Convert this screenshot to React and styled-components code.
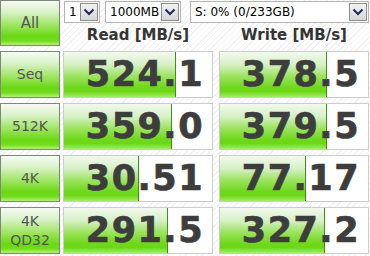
import React from "react";
import styled, { createGlobalStyle } from "styled-components";

// Global page style
const GlobalStyle = createGlobalStyle`
    html, body {
        margin: 0;
        padding: 0;
        background: #ffffff;
    }
`

// Data
const combos = [
    { label: "1", width: 36 },
    { label: "1000MB", width: 76 },
    { label: "S: 0% (0/233GB)", width: 179 },
]

const rows = [
    { name: ["Seq"], read: "524.1", readBar: 112, write: "378.5", writeBar: 107 },
    { name: ["512K"], read: "359.0", readBar: 108, write: "379.5", writeBar: 107 },
    { name: ["4K"], read: "30.51", readBar: 75, write: "77.17", writeBar: 86 },
    { name: ["4K", "QD32"], read: "291.5", readBar: 104, write: "327.2", writeBar: 105 },
]

// Window
const Window = styled.div`
    width: 370px;
    height: 256px;
    overflow: hidden;
    box-sizing: border-box;
    display: flex;
    flex-direction: column;
    gap: 5px;
    background-color: #ffffff;
    background-image: repeating-linear-gradient(
        135deg,
        #ffffff 0px,
        #ffffff 3px,
        #f1f1f1 3px,
        #f1f1f1 4px
    );
    font-family: "DejaVu Sans", Verdana, sans-serif;
`

// Row of a button and two meters
const Row = styled.div`
    display: flex;
    gap: 3px;
    height: ${(props) => props.height || 47}px;
`

// Green button on the left
const TestButton = styled.div`
    width: 60px;
    height: 100%;
    box-sizing: border-box;
    border: 1px solid #7b8a78;
    display: flex;
    flex-direction: column;
    align-items: center;
    justify-content: center;
    color: #555555;
    font-size: ${(props) => props.size || 14}px;
    line-height: 19px;
    background: linear-gradient(
        to bottom,
        #f6faf3 0%,
        #d9f2c9 25%,
        #98e356 58%,
        #6ad812 80%,
        #72dc1c 90%,
        #b4f07c 100%
    );
`

// Right part of the top row
const Header = styled.div`
    flex: 1;
    display: flex;
    flex-direction: column;
    padding-top: 1px;
`

// Combo row
const ComboBar = styled.div`
    display: flex;
    gap: 5px;
    height: 22px;
    padding-left: 1px;

    & > :last-child {
        margin-left: 4px;
    }
`

const Combo = styled.div`
    width: ${(props) => props.width}px;
    box-sizing: border-box;
    border: 1px solid #b4b4b4;
    background: #ffffff;
    display: flex;
    align-items: center;
    justify-content: space-between;
    padding: 1px;
    font-size: 12px;
    color: #000000;
`

const ComboText = styled.span`
    padding-left: 3px;
    white-space: nowrap;
`

const DropButton = styled.div`
    width: 18px;
    height: 100%;
    box-sizing: border-box;
    border: 1px solid #8c8c8c;
    background: linear-gradient(to bottom, #f2f2f2, #d6d6d6);
    display: flex;
    align-items: center;
    justify-content: center;
`

// Column titles
const Titles = styled.div`
    flex: 1;
    display: flex;
    gap: 6px;
    align-items: center;
    padding-top: 1px;
`

const Title = styled.div`
    width: 150px;
    text-align: center;
    font-weight: bold;
    font-size: 15px;
    color: #353535;
`

// Meter cell
const Meters = styled.div`
    display: flex;
    gap: 6px;
`

const Meter = styled.div`
    position: relative;
    width: 150px;
    height: 100%;
    box-sizing: border-box;
    border: 1px solid #cccccc;
    background: #ffffff;
    display: flex;
    align-items: center;
    justify-content: flex-end;
    padding-right: 8px;
    overflow: hidden;
`

const Fill = styled.div`
    position: absolute;
    left: 0;
    top: 0;
    bottom: 0;
    border-right: 1px solid #3f8f1a;
    background: linear-gradient(
        to bottom,
        #f2f9ee 0%,
        #d6f0c6 28%,
        #9ae35c 55%,
        #70d81c 78%,
        #6cd716 88%,
        #a6ec6a 100%
    );
`

const Value = styled.span`
    position: relative;
    font-weight: bold;
    font-size: 35px;
    letter-spacing: 1.5px;
    color: #3d3d3d;
    line-height: 1;
    -webkit-text-stroke: 0.7px #3d3d3d;
`

const Chevron = () => (
    <svg width="12" height="8" viewBox="0 0 12 8">
        <polyline points="1.5,1.5 6,6 10.5,1.5" fill="none" stroke="#1c2a56" strokeWidth="2" />
    </svg>
)

const Cell = ({ value, bar }) => (
    <Meter>
        <Fill style={{ width: bar - 1 }} />
        <Value>{value}</Value>
    </Meter>
)

const App = () => {
    return (
        <>
            <GlobalStyle />
            <Window>

                <Row height={46}>
                    <TestButton size={15}>All</TestButton>
                    <Header>
                        <ComboBar>
                            {combos.map((c, i) => (
                                <Combo key={i} width={c.width}>
                                    <ComboText>{c.label}</ComboText>
                                    <DropButton><Chevron /></DropButton>
                                </Combo>
                            ))}
                        </ComboBar>
                        <Titles>
                            <Title>Read [MB/s]</Title>
                            <Title>Write [MB/s]</Title>
                        </Titles>
                    </Header>
                </Row>

                {rows.map((r, i) => (
                    <Row key={i}>
                        <TestButton>
                            {r.name.map((n) => <span key={n}>{n}</span>)}
                        </TestButton>
                        <Meters>
                            <Cell value={r.read} bar={r.readBar} />
                            <Cell value={r.write} bar={r.writeBar} />
                        </Meters>
                    </Row>
                ))}

            </Window>
        </>
    )
}

export default App;
